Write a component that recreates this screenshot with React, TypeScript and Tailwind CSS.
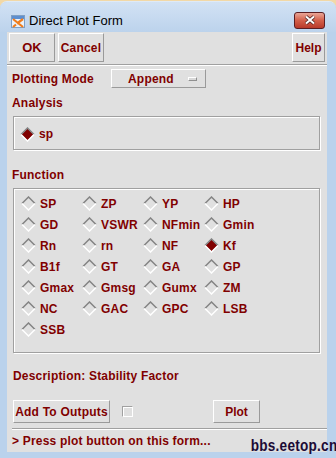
import React from 'react';

const font = { fontFamily: '"Liberation Sans", Arial, sans-serif' };

const raised = "bg-[#e0e0e0] border border-t-white border-l-white border-r-[#9a9a9a] border-b-[#9a9a9a]";
const etched = "border border-[#a0a0a0] shadow-[inset_1px_1px_0_#ffffff,1px_1px_0_#ffffff]";
const label = "text-[12px] font-bold text-[#800000] leading-[14px] tracking-[0.2px]";

const Diamond: React.FC<{ on?: boolean }> = ({ on }) => (
    <svg width="15" height="15" viewBox="0 0 15 15" className="shrink-0">
        {on && <polygon points="7.5,1.5 13.5,7.5 7.5,13.5 1.5,7.5" fill="#800000" />}
        <polyline points="1,7.5 7.5,1 14,7.5" fill="none" stroke="#848484" strokeWidth="1.5" />
        <polyline points="1,7.5 7.5,14 14,7.5" fill="none" stroke="#ffffff" strokeWidth="1.5" />
    </svg>
);

const functions = [
    'SP', 'ZP', 'YP', 'HP',
    'GD', 'VSWR', 'NFmin', 'Gmin',
    'Rn', 'rn', 'NF', 'Kf',
    'B1f', 'GT', 'GA', 'GP',
    'Gmax', 'Gmsg', 'Gumx', 'ZM',
    'NC', 'GAC', 'GPC', 'LSB',
    'SSB',
];

export default function App() {
    return (
        <div className="w-[336px] h-[458px] bg-[#f2d8a6] pt-[1px] overflow-hidden" style={font}>
            <div className="relative h-[457px] rounded-t-[7px] bg-[#bad2ec] border-t border-[#dfeaf6] flex flex-col">
                {/* title bar */}
                <div className="h-[30px] flex items-center pl-[11px] pr-[11px] bg-gradient-to-b from-[#d2e2f4] to-[#bcd3ec] rounded-t-[7px]">
                    <svg width="14" height="13" viewBox="0 0 14 13" className="mt-[8px]">
                        <rect x="0.5" y="0.5" width="13" height="12" fill="#eaf2fb" stroke="#7f9fc4" />
                        <rect x="1" y="1" width="12" height="3" fill="#5d8fd0" />
                        <path d="M2 4 L12 12 M12 4 L6 8.5 M2 12 L5 9.5" stroke="#f07d1c" strokeWidth="2.2" />
                    </svg>
                    <span className="ml-[4px] mt-[7px] text-[13px] text-black">Direct Plot Form</span>
                    <div className="ml-auto mt-[6px] w-[31px] h-[17px] rounded-[3px] border border-[#5b1e22] bg-gradient-to-b from-[#e8a597] via-[#d35f4a] to-[#b8392a] flex items-center justify-center">
                        <svg width="12" height="10" viewBox="0 0 12 10">
                            <path d="M2 1.5 L10 8.5 M10 1.5 L2 8.5" stroke="#4a2222" strokeWidth="3.6" />
                            <path d="M2 1.5 L10 8.5 M10 1.5 L2 8.5" stroke="#ffffff" strokeWidth="2" />
                        </svg>
                    </div>
                </div>

                {/* content */}
                <div className="mx-[7px] mr-[9px] h-[420px] bg-[#e0e0e0] flex flex-col">
                    <div className="mt-[1px] h-[29px] flex px-[2px] gap-[3px]">
                        <button className={`${raised} w-[46px] text-[13px] font-bold text-[#800000]`}>OK</button>
                        <button className={`${raised} w-[46px] text-[12px] font-bold text-[#800000] tracking-[0.2px]`}>Cancel</button>
                        <button className={`${raised} ml-auto w-[33px] text-[12px] font-bold text-[#800000]`}>Help</button>
                    </div>
                    <div className="mt-[2px] h-px bg-[#a0a0a0]" />
                    <div className="h-px bg-white" />

                    <div className="mt-[3px] h-[19px] flex items-center pl-[5px]">
                        <span className={`${label} w-[99px]`}>Plotting Mode</span>
                        <div className={`${raised} w-[95px] h-[19px] flex items-center`}>
                            <span className={`${label} ml-[16px]`}>Append</span>
                            <span className="ml-auto mr-[8px] w-[9px] h-[4px] bg-[#d8d8d8] border border-t-white border-l-white border-r-[#909090] border-b-[#909090]" />
                        </div>
                    </div>

                    <div className={`${label} mt-[8px] h-[14px] pl-[5px]`}>Analysis</div>
                    <div className={`${etched} mt-[6px] ml-[6px] w-[307px] h-[34px] flex items-center pl-[6px] pt-[2px]`}>
                        <Diamond on />
                        <span className={`${label} ml-[4px]`}>sp</span>
                    </div>

                    <div className={`${label} mt-[18px] h-[14px] pl-[5px]`}>Function</div>
                    <div className={`${etched} mt-[6px] ml-[6px] w-[307px] h-[165px] pl-[7px] pt-[4px]`}>
                        <div className="grid grid-cols-[61px_61px_61px_61px]">
                            {functions.map(f => (
                                <div key={f} className="h-[21px] flex items-center">
                                    <Diamond on={f === 'Kf'} />
                                    <span className={`${label} ml-[4px]`}>{f}</span>
                                </div>
                            ))}
                        </div>
                    </div>

                    <div className={`${label} mt-[16px] h-[14px] pl-[6px]`}>Description: Stability Factor</div>

                    <div className="mt-[17px] h-[23px] flex items-center pl-[6px]">
                        <button className={`${raised} w-[97px] h-[23px] text-[12px] font-bold text-[#800000] tracking-[0.2px]`}>Add To Outputs</button>
                        <span className="ml-[12px] w-[11px] h-[11px] border border-t-[#a0a0a0] border-l-[#a0a0a0] border-r-white border-b-white bg-[#e0e0e0] shadow-[inset_1px_1px_0_#ffffff]" />
                        <button className={`${raised} ml-[80px] w-[47px] h-[23px] text-[12px] font-bold text-[#800000]`}>Plot</button>
                    </div>

                    <div className="mt-[5px] ml-[5px] h-px bg-[#a0a0a0]" />
                    <div className="ml-[5px] h-px bg-white" />
                    <div className={`${label} mt-[4px] h-[14px] pl-[5px]`}>&gt; Press plot button on this form...</div>
                </div>

                {/* watermark */}
                <div className="absolute right-[-1px] top-[434px] text-[17px] font-bold text-[#1d0b36] leading-[20px] scale-x-[0.8] origin-right tracking-[0.3px]">
                    bbs.eetop.cn
                </div>
            </div>
        </div>
    );
}
